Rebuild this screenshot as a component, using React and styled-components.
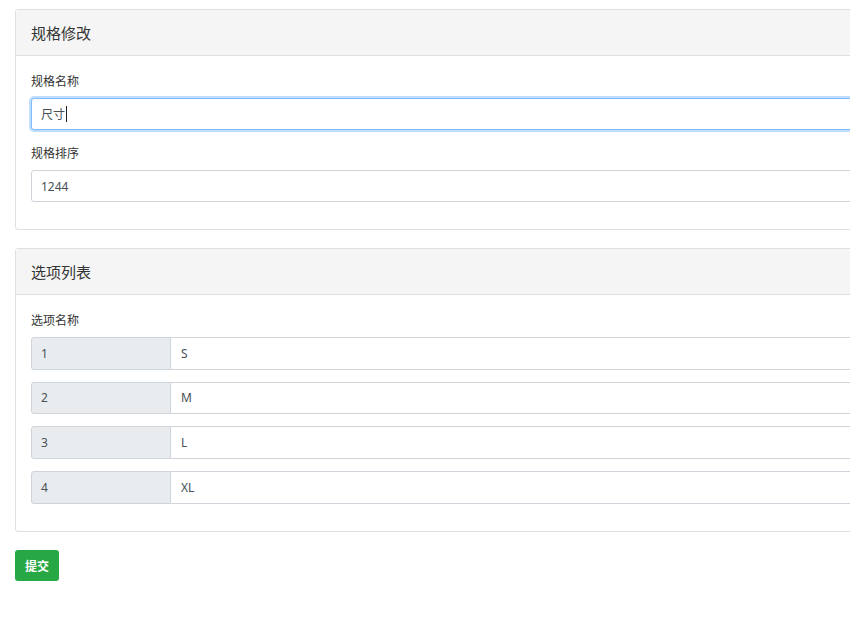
import React from 'react';
import styled, { createGlobalStyle } from 'styled-components';

const GlobalStyle = createGlobalStyle`
  html, body {
    margin: 0;
    padding: 0;
    background: #fff;
    overflow: hidden;
  }
  body {
    font-family: "Noto Sans", "Noto Sans CJK SC", sans-serif;
    color: #212529;
    font-size: 12px;
  }
`;

const Page = styled.div`
  width: 1100px;
  padding: 9px 15px;
`;

const Card = styled.div`
  border: 1px solid #dfdfdf;
  border-radius: 3px;
  background: #fff;
  margin-bottom: 18px;
`;

const CardHeader = styled.div`
  height: 45px;
  display: flex;
  align-items: center;
  padding: 0 15px;
  background: #f5f5f5;
  border-bottom: 1px solid #dfdfdf;
  font-size: 15px;
  color: #333;
`;

const CardBody = styled.div`
  padding: ${(p) => p.$pad};
`;

const FormGroup = styled.div`
  margin-bottom: 15px;
`;

const Label = styled.div`
  font-size: 12px;
  line-height: 18px;
  color: #333;
  margin-bottom: 7px;
`;

const Field = styled.div`
  box-sizing: border-box;
  height: 32px;
  display: flex;
  align-items: center;
  padding: 0 9px;
  border: 1px solid ${(p) => (p.$focus ? '#80bdff' : '#ced4da')};
  border-radius: 3px;
  box-shadow: ${(p) => (p.$focus ? '0 0 0 2px rgba(0,123,255,.25)' : 'none')};
  color: #495057;
  font-size: 12px;
  background: #fff;
`;

const Caret = styled.span`
  display: inline-block;
  width: 1px;
  height: 16px;
  background: #222;
  margin-left: 1px;
`;

const InputGroup = styled.div`
  box-sizing: border-box;
  display: flex;
  height: 32.67px;
  margin-bottom: 12px;
  &:last-child {
    margin-bottom: 0;
  }
`;

const Addon = styled.div`
  box-sizing: border-box;
  width: 140px;
  padding-left: 9px;
  display: flex;
  align-items: center;
  background: #e9ecef;
  border: 1px solid #ced4da;
  border-radius: 3px 0 0 3px;
  color: #495057;
  font-size: 12px;
`;

const GroupInput = styled.div`
  flex: 1;
  display: flex;
  align-items: center;
  padding-left: 10px;
  border: 1px solid #ced4da;
  border-left: none;
  border-radius: 0 3px 3px 0;
  color: #495057;
  font-size: 12px;
`;

const SubmitButton = styled.button`
  display: block;
  height: 31px;
  width: 44px;
  border: none;
  border-radius: 3px;
  background: #28a745;
  color: #fff;
  font-family: "Noto Sans CJK SC", sans-serif;
  font-weight: 700;
  font-size: 12px;
  padding: 0;
  cursor: pointer;
`;

const options = [
  { id: 1, name: 'S' },
  { id: 2, name: 'M' },
  { id: 3, name: 'L' },
  { id: 4, name: 'XL' },
];

export default function App() {
  return (
    <Page>
      <GlobalStyle />
      <Card>
        <CardHeader>规格修改</CardHeader>
        <CardBody $pad="17px 15px 12px">
          <FormGroup>
            <Label>规格名称</Label>
            <Field $focus>
              尺寸<Caret />
            </Field>
          </FormGroup>
          <FormGroup>
            <Label>规格排序</Label>
            <Field>1244</Field>
          </FormGroup>
        </CardBody>
      </Card>
      <Card>
        <CardHeader>选项列表</CardHeader>
        <CardBody $pad="17px 15px 27px">
          <Label>选项名称</Label>
          {options.map((o) => (
            <InputGroup key={o.id}>
              <Addon>{o.id}</Addon>
              <GroupInput>{o.name}</GroupInput>
            </InputGroup>
          ))}
        </CardBody>
      </Card>
      <SubmitButton>提交</SubmitButton>
    </Page>
  );
}
